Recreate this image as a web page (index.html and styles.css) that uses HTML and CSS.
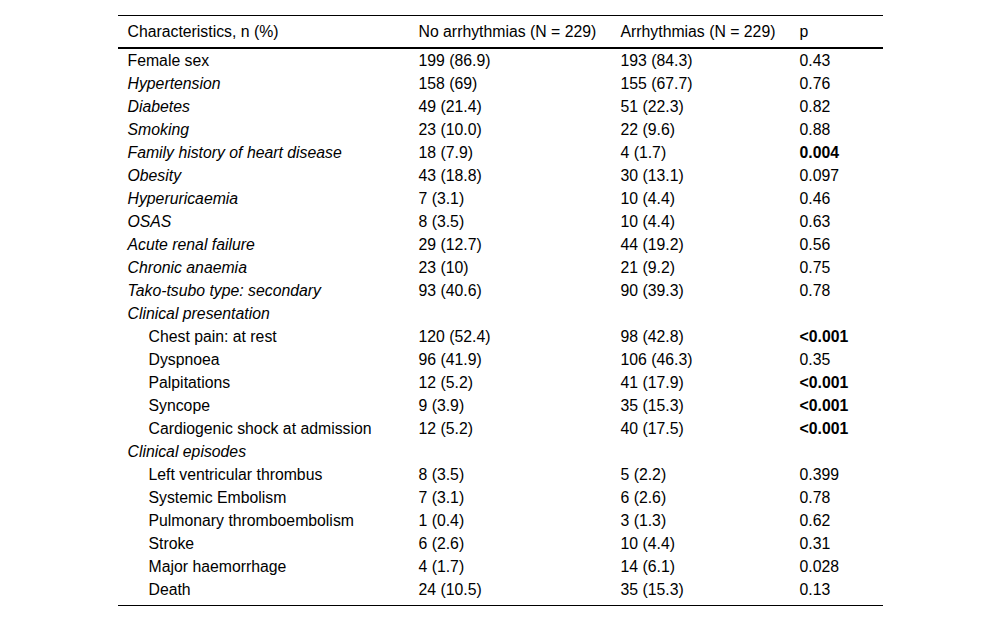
FILE: index.html
```html
<!DOCTYPE html>
<html>
<head>
<meta charset="utf-8">
<link rel="stylesheet" href="styles.css">
</head>
<body>
<table class="data">
  <colgroup>
    <col class="c1"><col class="c2"><col class="c3"><col class="c4">
  </colgroup>
  <thead>
    <tr><th>Characteristics, n (%)</th><th>No arrhythmias (N = 229)</th><th>Arrhythmias (N = 229)</th><th>p</th></tr>
  </thead>
  <tbody>
    <tr><td>Female sex</td><td>199 (86.9)</td><td>193 (84.3)</td><td>0.43</td></tr>
    <tr><td class="it">Hypertension</td><td>158 (69)</td><td>155 (67.7)</td><td>0.76</td></tr>
    <tr><td class="it">Diabetes</td><td>49 (21.4)</td><td>51 (22.3)</td><td>0.82</td></tr>
    <tr><td class="it">Smoking</td><td>23 (10.0)</td><td>22 (9.6)</td><td>0.88</td></tr>
    <tr><td class="it">Family history of heart disease</td><td>18 (7.9)</td><td>4 (1.7)</td><td class="b">0.004</td></tr>
    <tr><td class="it">Obesity</td><td>43 (18.8)</td><td>30 (13.1)</td><td>0.097</td></tr>
    <tr><td class="it">Hyperuricaemia</td><td>7 (3.1)</td><td>10 (4.4)</td><td>0.46</td></tr>
    <tr><td class="it">OSAS</td><td>8 (3.5)</td><td>10 (4.4)</td><td>0.63</td></tr>
    <tr><td class="it">Acute renal failure</td><td>29 (12.7)</td><td>44 (19.2)</td><td>0.56</td></tr>
    <tr><td class="it">Chronic anaemia</td><td>23 (10)</td><td>21 (9.2)</td><td>0.75</td></tr>
    <tr><td class="it">Tako-tsubo type: secondary</td><td>93 (40.6)</td><td>90 (39.3)</td><td>0.78</td></tr>
    <tr><td class="it">Clinical presentation</td><td></td><td></td><td></td></tr>
    <tr><td class="ind">Chest pain: at rest</td><td>120 (52.4)</td><td>98 (42.8)</td><td class="b">&lt;0.001</td></tr>
    <tr><td class="ind">Dyspnoea</td><td>96 (41.9)</td><td>106 (46.3)</td><td>0.35</td></tr>
    <tr><td class="ind">Palpitations</td><td>12 (5.2)</td><td>41 (17.9)</td><td class="b">&lt;0.001</td></tr>
    <tr><td class="ind">Syncope</td><td>9 (3.9)</td><td>35 (15.3)</td><td class="b">&lt;0.001</td></tr>
    <tr><td class="ind">Cardiogenic shock at admission</td><td>12 (5.2)</td><td>40 (17.5)</td><td class="b">&lt;0.001</td></tr>
    <tr><td class="it">Clinical episodes</td><td></td><td></td><td></td></tr>
    <tr><td class="ind">Left ventricular thrombus</td><td>8 (3.5)</td><td>5 (2.2)</td><td>0.399</td></tr>
    <tr><td class="ind">Systemic Embolism</td><td>7 (3.1)</td><td>6 (2.6)</td><td>0.78</td></tr>
    <tr><td class="ind">Pulmonary thromboembolism</td><td>1 (0.4)</td><td>3 (1.3)</td><td>0.62</td></tr>
    <tr><td class="ind">Stroke</td><td>6 (2.6)</td><td>10 (4.4)</td><td>0.31</td></tr>
    <tr><td class="ind">Major haemorrhage</td><td>4 (1.7)</td><td>14 (6.1)</td><td>0.028</td></tr>
    <tr class="last"><td class="ind">Death</td><td>24 (10.5)</td><td>35 (15.3)</td><td>0.13</td></tr>
  </tbody>
</table>
</body>
</html>
```

FILE: styles.css
```css
html, body {
  margin: 0;
  padding: 0;
  background: #fff;
}
body {
  font-family: "Liberation Sans", Arial, sans-serif;
  font-size: 15.8px;
  line-height: 18px;
  color: #000;
}
.data {
  width: 765px;
  margin: 15px auto 0;
  border-collapse: collapse;
  table-layout: fixed;
  border-top: 1px solid #000;
  border-bottom: 1px solid #000;
}
.c1 { width: 291px; }
.c2 { width: 202px; }
.c3 { width: 179px; }
.c4 { width: 93px; }
.data th {
  font-weight: normal;
  text-align: left;
  height: 31px;
  padding: 0 0 0 10px;
  border-bottom: 2px solid #000;
  vertical-align: middle;
}
.data td {
  height: 23px;
  padding: 0 0 0 10px;
  vertical-align: middle;
  white-space: nowrap;
}
.data tr.last td {
  padding-bottom: 4px;
}
.it { font-style: italic; }
.b { font-weight: bold; }
.data td.ind { padding-left: 31px; }
```
